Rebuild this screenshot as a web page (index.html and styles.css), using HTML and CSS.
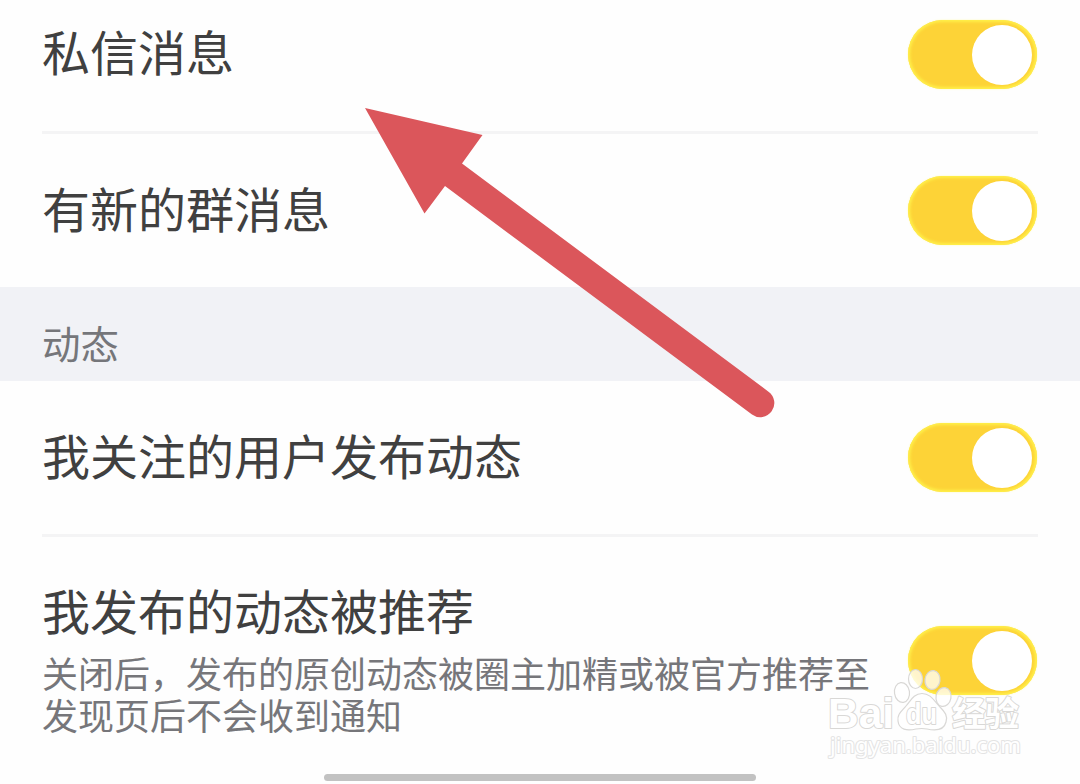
FILE: index.html
```
<!DOCTYPE html>
<html lang="zh-CN">
<head>
    <meta charset="UTF-8">
    <meta name="viewport" content="width=device-width, initial-scale=1.0">
    <title>消息通知</title>
    <link rel="stylesheet" href="styles.css">
</head>
<body>
    <div class="page">
        <div class="row row-first">
            <div class="title">私信消息</div>
            <div class="switch"><span class="knob"></span></div>
        </div>
        <div class="line"></div>
        <div class="row">
            <div class="title">有新的群消息</div>
            <div class="switch"><span class="knob"></span></div>
        </div>
        <div class="section">动态</div>
        <div class="row">
            <div class="title">我关注的用户发布动态</div>
            <div class="switch"><span class="knob"></span></div>
        </div>
        <div class="line"></div>
        <div class="row row-last">
            <div class="text">
                <div class="title">我发布的动态被推荐</div>
                <div class="desc">关闭后，发布的原创动态被圈主加精或被官方推荐至<br>发现页后不会收到通知</div>
            </div>
            <div class="switch"><span class="knob"></span></div>
        </div>
        <div class="home-bar"></div>

        <!-- arrow pointing at the first row -->
        <svg class="arrow" width="420" height="320" viewBox="360 100 420 320">
            <path d="M365 108L482.500 135L462 163.500L768.500 391.700A14 14 0 0 1 752 414.500L445 186L424.500 213.500Z" fill="#db565b"/>
        </svg>

        <!-- watermark -->
        <svg class="watermark" width="210" height="104" viewBox="820 660 210 104">
            <g fill="#fff" stroke="#d9d8d6" stroke-width="1.200" stroke-linejoin="round">
                <g class="wm-logo">
                    <text x="828" y="728" textLength="66" lengthAdjust="spacingAndGlyphs">Bai</text>
                    <g fill-opacity=".75">
                        <ellipse cx="902" cy="692.500" rx="7.500" ry="10" transform="rotate(-8 902 692.500)"/>
                        <ellipse cx="915.500" cy="679" rx="7" ry="9.500"/>
                        <ellipse cx="932.500" cy="680" rx="7.500" ry="9.500" transform="rotate(8 932.500 680)"/>
                        <ellipse cx="943.500" cy="697" rx="7.500" ry="9.500" transform="rotate(10 943.500 697)"/>
                    </g>
                    <path d="M922 693.500C931 693.500 934 701 940 707C945 712 948 716 946 722C944 730 936 731 927 729Q922 728 916 729C907 731 899 730 898 721C897 714 902 711 906 706C911 700 914 693.500 922 693.500Z"/>
                    <text class="wm-du" x="906" y="724" textLength="31" lengthAdjust="spacingAndGlyphs">du</text>
                </g>
                <text class="wm-cn" x="952" y="726" textLength="67">经验</text>
                <text class="wm-url" x="830" y="753" textLength="191" lengthAdjust="spacingAndGlyphs">jingyan.baidu.com</text>
            </g>
        </svg>
    </div>
</body>
</html>
```

FILE: styles.css
```
* {
    box-sizing: border-box;
}
body {
    margin: 0;
    background-color: #fefefe;
    font-family: "Noto Sans CJK SC", sans-serif;
}
.page {
    position: relative;
    width: 1080px;
    height: 784px;
    overflow: hidden;
}
.row {
    display: flex;
    align-items: center;
    justify-content: space-between;
    height: 153px;
    padding: 0 43px 0 42px;
}
.row-first {
    height: 131px;
    padding-bottom: 23px;
}
.row-last {
    height: 237px;
    align-items: flex-start;
    padding-top: 42px;
}
.row-last .switch {
    margin-top: 47px;
}
.title {
    font-size: 48px;
    line-height: 60px;
    color: #404040;
    white-space: nowrap;
}
.row > .title {
    padding-bottom: 8px;
}
.desc {
    margin-top: 12px;
    font-size: 36px;
    line-height: 42px;
    color: #76767a;
    white-space: nowrap;
}
.line {
    height: 3px;
    margin: 0 42px;
    background-color: #f4f4f5;
}
.section {
    height: 94px;
    padding: 25px 42px 0;
    font-size: 38.4px;
    line-height: 60px;
    color: #75767a;
    background-color: #f1f2f6;
}

/* Switch */
.switch {
    flex: none;
    width: 129px;
    height: 69px;
    padding: 5px;
    border-radius: 35px;
    background-color: #fdd337;
    box-shadow: inset 0 0 3px 2px #fff04a, 0 0 2px #fffbb0;
}
.knob {
    display: block;
    width: 60px;
    height: 60px;
    margin-left: 59px;
    border-radius: 50%;
    background-color: #fff;
}

.home-bar {
    width: 432px;
    height: 7px;
    margin: 0 auto;
    border-radius: 4px;
    background-color: #c2c2c2;
}
.arrow {
    position: absolute;
    left: 360px;
    top: 100px;
}
.watermark {
    position: absolute;
    left: 820px;
    top: 660px;
}
.wm-logo {
    font-family: "Liberation Sans", sans-serif;
    font-size: 43px;
    font-weight: bold;
}
.wm-logo text,
.wm-cn,
.wm-url {
    paint-order: stroke;
    stroke-width: 2;
}
.wm-du {
    font-size: 30px;
}
.wm-cn {
    font-family: "Noto Sans CJK SC", sans-serif;
    font-size: 34px;
    font-weight: bold;
}
.wm-url {
    font-family: "Noto Sans", sans-serif;
    font-size: 21px;
    stroke: #e4e4e4;
}
```
